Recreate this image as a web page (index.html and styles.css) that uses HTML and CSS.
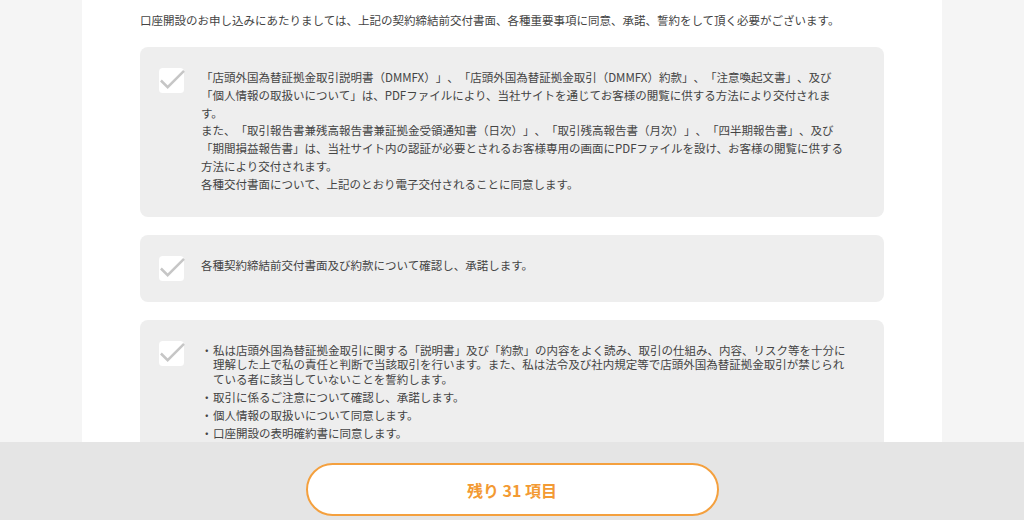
FILE: index.html
```html
<!DOCTYPE html>
<html lang="ja">
<head>
    <meta charset="UTF-8">
    <meta name="viewport" content="width=device-width, initial-scale=1.0">
    <title>口座開設 同意事項</title>
    <link rel="stylesheet" href="styles.css">
</head>
<body>
    <div class="page">
        <p class="lead">口座開設のお申し込みにあたりましては、上記の契約締結前交付書面、各種重要事項に同意、承諾、誓約をして頂く必要がございます。</p>

        <div class="agree">
            <span class="check">
                <svg width="26" height="26" viewBox="0 0 26 26"><rect width="26" height="26" rx="4" fill="#fff"/><polyline points="2,13 9,20 26,3" fill="none" stroke="#c6c6c6" stroke-width="2.6"/></svg>
            </span>
            <div class="agree-text">
                「店頭外国為替証拠金取引説明書（DMMFX）」、「店頭外国為替証拠金取引（DMMFX）約款」、「注意喚起文書」、及び<br>
                「個人情報の取扱いについて」は、PDFファイルにより、当社サイトを通じてお客様の閲覧に供する方法により交付されま<br>
                す。<br>
                また、「取引報告書兼残高報告書兼証拠金受領通知書（日次）」、「取引残高報告書（月次）」、「四半期報告書」、及び<br>
                「期間損益報告書」は、当社サイト内の認証が必要とされるお客様専用の画面にPDFファイルを設け、お客様の閲覧に供する<br>
                方法により交付されます。<br>
                各種交付書面について、上記のとおり電子交付されることに同意します。
            </div>
        </div>

        <div class="agree">
            <span class="check">
                <svg width="26" height="26" viewBox="0 0 26 26"><rect width="26" height="26" rx="4" fill="#fff"/><polyline points="2,13 9,20 26,3" fill="none" stroke="#c6c6c6" stroke-width="2.6"/></svg>
            </span>
            <div class="agree-text">各種契約締結前交付書面及び約款について確認し、承諾します。</div>
        </div>

        <div class="agree">
            <span class="check">
                <svg width="26" height="26" viewBox="0 0 26 26"><rect width="26" height="26" rx="4" fill="#fff"/><polyline points="2,13 9,20 26,3" fill="none" stroke="#c6c6c6" stroke-width="2.6"/></svg>
            </span>
            <ul class="agree-list">
                <li>私は店頭外国為替証拠金取引に関する「説明書」及び「約款」の内容をよく読み、取引の仕組み、内容、リスク等を十分に<br>理解した上で私の責任と判断で当該取引を行います。また、私は法令及び社内規定等で店頭外国為替証拠金取引が禁じられ<br>ている者に該当していないことを誓約します。</li>
                <li>取引に係るご注意について確認し、承諾します。</li>
                <li>個人情報の取扱いについて同意します。</li>
                <li>口座開設の表明確約書に同意します。</li>
                <li>反社会的勢力でないことを表明し、確約します。</li>
            </ul>
        </div>
    </div>

    <div class="footer">
        <button class="remain">残り 31 項目</button>
    </div>
</body>
</html>
```

FILE: styles.css
```css
body {
    margin: 0;
    background-color: #f5f5f5;
    color: #444;
    font-family: "Noto Sans CJK JP", "Noto Sans", sans-serif;
    font-size: 11.5px;
    text-spacing-trim: space-all;
}
.page {
    width: 744px;
    margin: 0 auto;
    padding: 11px 58px 120px;
    background: #fff;
}
.lead {
    margin: 0 0 18px;
    line-height: 18px;
}
.agree {
    display: flex;
    align-items: flex-start;
    gap: 17px;
    padding: 21px 20px 21px 19px;
    margin-bottom: 18px;
    background: #eee;
    border-radius: 8px;
}
.check {
    flex: none;
    width: 25px;
    height: 25px;
}
.check svg {
    display: block;
    width: 25px;
    height: 25px;
    overflow: visible;
}
.agree-text {
    padding: 1px 0 2px;
    line-height: 17.8px;
    white-space: nowrap;
}
.agree-list {
    margin: 0;
    padding: 2px 0 0;
    list-style: none;
    line-height: 14.5px;
    white-space: nowrap;
}
.agree-list li {
    position: relative;
    padding-left: 12px;
    margin-bottom: 3.5px;
}
.agree-list li::before {
    content: "・";
    position: absolute;
    left: 0;
    top: 0;
}
.footer {
    position: fixed;
    left: 0;
    right: 0;
    bottom: 0;
    height: 57px;
    padding: 21px 0 0;
    background: #e5e5e5;
    display: flex;
    justify-content: center;
}
.remain {
    width: 413px;
    height: 53px;
    background: #fff;
    border: 2px solid #f4a03e;
    border-radius: 27px;
    color: #f39a33;
    font-family: "Noto Sans CJK JP", "Noto Sans", sans-serif;
    font-size: 16px;
    font-weight: bold;
    cursor: pointer;
}
```
